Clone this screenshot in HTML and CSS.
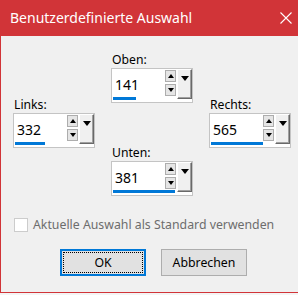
FILE: index.html
```html
<!DOCTYPE html>
<html lang="de">
<head>
<meta charset="utf-8">
<title>Benutzerdefinierte Auswahl</title>
<link rel="stylesheet" href="styles.css">
</head>
<body>
<div class="window">
  <div class="titlebar">
    <span class="title">Benutzerdefinierte Auswahl</span>
    <svg class="close" width="12" height="12" viewBox="0 0 12 12"><path d="M0.5 0.5 L11.5 11.5 M11.5 0.5 L0.5 11.5" stroke="#fff" stroke-width="1.1" fill="none"/></svg>
  </div>
  <div class="content">
    <div class="fields">
      <div class="field side">
        <label class="lbl">Links:</label>
        <div class="spin">
          <span class="value">332</span>
          <span class="bar" style="width:30px"></span>
          <span class="updown"><span class="sb"><i class="up"></i></span><span class="sb"><i class="down"></i></span></span>
          <span class="drop"><i class="dtri"></i></span>
        </div>
      </div>
      <div class="middle">
        <div class="field">
          <label class="lbl">Oben:</label>
          <div class="spin">
            <span class="value">141</span>
            <span class="bar" style="width:23px"></span>
            <span class="updown"><span class="sb"><i class="up"></i></span><span class="sb"><i class="down"></i></span></span>
            <span class="drop"><i class="dtri"></i></span>
          </div>
        </div>
        <div class="field">
          <label class="lbl">Unten:</label>
          <div class="spin">
            <span class="value">381</span>
            <span class="bar" style="width:62px"></span>
            <span class="updown"><span class="sb"><i class="up"></i></span><span class="sb"><i class="down"></i></span></span>
            <span class="drop"><i class="dtri"></i></span>
          </div>
        </div>
      </div>
      <div class="field side">
        <label class="lbl">Rechts:</label>
        <div class="spin">
          <span class="value">565</span>
          <span class="bar" style="width:52px"></span>
          <span class="updown"><span class="sb"><i class="up"></i></span><span class="sb"><i class="down"></i></span></span>
          <span class="drop"><i class="dtri"></i></span>
        </div>
      </div>
    </div>
    <div class="check">
      <span class="box"></span>
      <span class="checklabel">Aktuelle Auswahl als Standard verwenden</span>
    </div>
    <div class="buttons">
      <button class="btn default"><span class="focus">OK</span></button>
      <button class="btn">Abbrechen</button>
    </div>
  </div>
</div>
</body>
</html>
```

FILE: styles.css
```css
html, body {
  margin: 0;
  padding: 0;
  background: #f4f4f4;
}
body {
  font-family: "Noto Sans", "Open Sans", sans-serif;
  width: 298px;
  height: 295px;
  overflow: hidden;
}
.window {
  width: 298px;
  height: 293px;
  box-sizing: border-box;
  border: 1px solid #d13438;
  border-right: none;
  background: #f0f0f0;
  display: flex;
  flex-direction: column;
}
.titlebar {
  height: 35px;
  background: #d13438;
  display: flex;
  align-items: center;
  justify-content: space-between;
  padding: 0 6px 0 9px;
  color: #fff;
  flex: none;
}
.title {
  font-size: 14px;
  line-height: 18px;
  margin-top: -1px;
}
.close {
  display: block;
  margin-top: -2px;
}
.content {
  flex: 1;
  display: flex;
  flex-direction: column;
  padding: 15px 0 0 12px;
}
.fields {
  display: grid;
  grid-template-columns: repeat(3, 82px);
  column-gap: 16px;
}
.middle {
  display: flex;
  flex-direction: column;
  gap: 41px;
}
.side {
  align-self: center;
  margin-bottom: 4px;
}
.field {
  display: flex;
  flex-direction: column;
}
.lbl {
  font-size: 12.2px;
  line-height: 17px;
  color: #000;
  padding-left: 1px;
}
.spin {
  position: relative;
  height: 35px;
  box-sizing: border-box;
  border: 1px solid #c4c4c4;
  background: #fff;
  display: flex;
  align-items: flex-start;
}
.value {
  flex: 1;
  font-size: 14px;
  line-height: 20px;
  padding: 6px 0 0 3px;
  color: #000;
}
.bar {
  position: absolute;
  left: 1px;
  bottom: 2px;
  height: 3px;
  background: #0078d7;
}
.updown {
  display: flex;
  flex-direction: column;
  gap: 2px;
  margin-top: 1px;
  width: 11px;
}
.sb {
  height: 12px;
  box-sizing: border-box;
  border: 1px solid #adadad;
  background: #e5e5e5;
  display: flex;
  align-items: center;
  justify-content: center;
}
.up {
  width: 0;
  height: 0;
  border-left: 3px solid transparent;
  border-right: 3px solid transparent;
  border-bottom: 4px solid #000;
}
.down {
  width: 0;
  height: 0;
  border-left: 3px solid transparent;
  border-right: 3px solid transparent;
  border-top: 4px solid #000;
}
.drop {
  width: 15px;
  height: 30px;
  margin: 0 0 0 1px;
  box-sizing: border-box;
  background: #f0f0f0;
  border-top: 1px solid #fff;
  border-left: 1px solid #fff;
  border-right: 1px solid #696969;
  border-bottom: 1px solid #696969;
  box-shadow: inset -1px -1px 0 #a0a0a0;
  display: flex;
  justify-content: center;
  padding-top: 6px;
}
.dtri {
  width: 0;
  height: 0;
  border-left: 4px solid transparent;
  border-right: 4px solid transparent;
  border-top: 5px solid #000;
}
.check {
  display: flex;
  align-items: center;
  margin-top: 20px;
  padding-left: 1px;
  gap: 5px;
}
.box {
  width: 14px;
  height: 14px;
  box-sizing: border-box;
  border: 1px solid #cccccc;
  background: #fff;
}
.checklabel {
  font-size: 12.3px;
  line-height: 17px;
  color: #6d6d6d;
}
.buttons {
  display: flex;
  gap: 15px;
  margin-top: 16px;
  padding-left: 47px;
}
.btn {
  width: 86px;
  height: 27px;
  box-sizing: border-box;
  border: 1px solid #adadad;
  background: #e1e1e1;
  font-family: "Noto Sans", "Open Sans", sans-serif;
  font-size: 12.3px;
  color: #000;
  padding: 0;
  margin: 0;
  display: flex;
  align-items: center;
  justify-content: center;
}
.btn.default {
  border: 2px solid #0078d7;
  padding: 1px;
}
.focus {
  flex: 1;
  align-self: stretch;
  display: flex;
  align-items: center;
  justify-content: center;
  border: 1px dotted #000;
}
```
